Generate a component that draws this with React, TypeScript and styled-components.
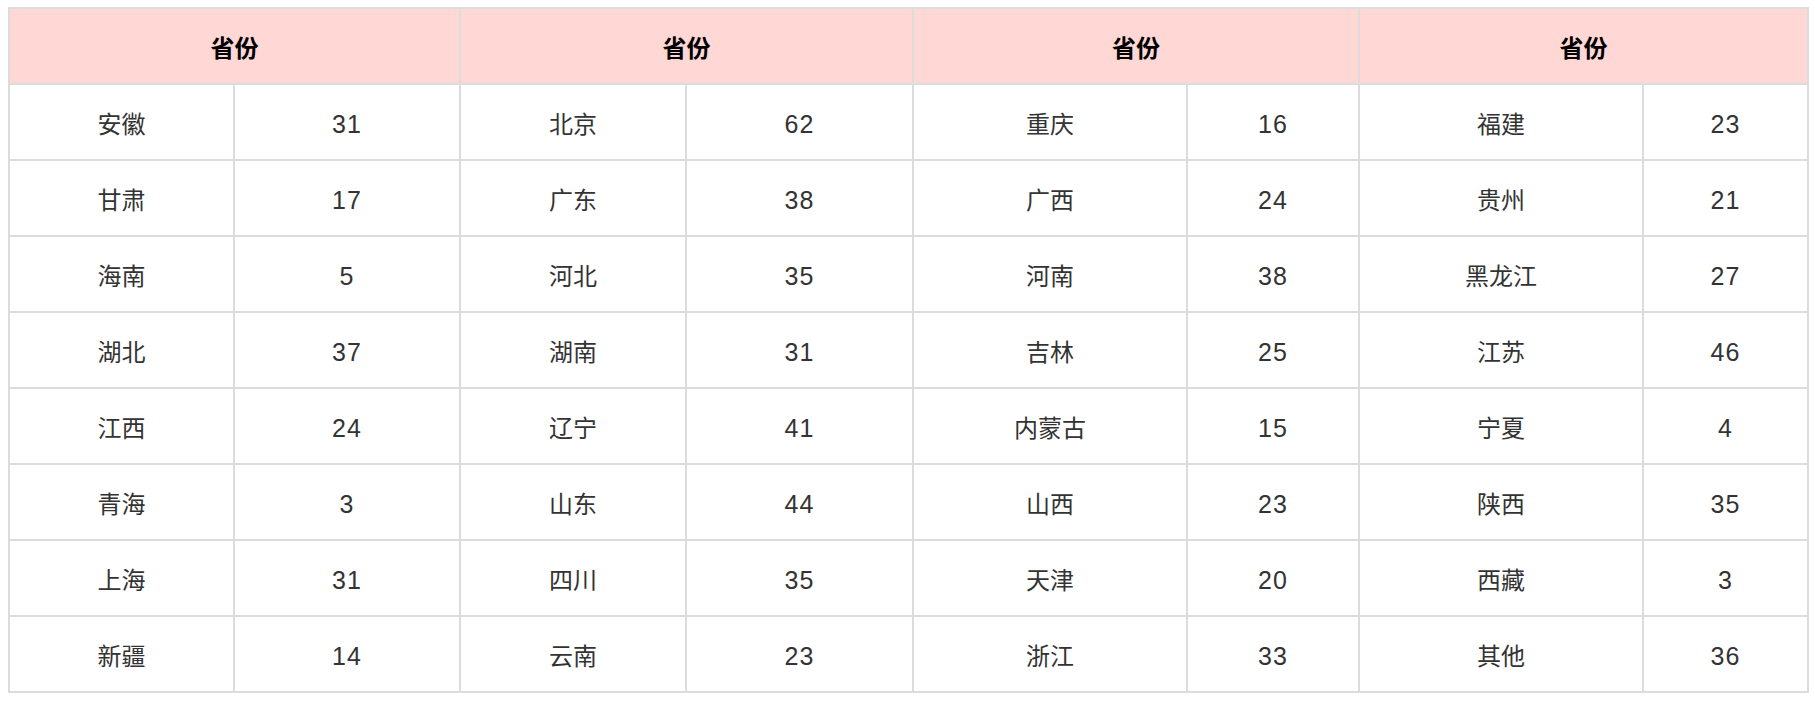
import styled, { createGlobalStyle } from 'styled-components';

const GlobalStyle = createGlobalStyle`
  body {
    margin: 0;
    background: #ffffff;
    font-family: "Liberation Sans", "Noto Sans CJK SC", sans-serif;
  }
`;

const Page = styled.div`
  padding: 7px 8px;
`;

const Grid = styled.div`
  display: grid;
  width: 1801px;
  grid-template-columns: 223px 224px 224px 225px 272px 170px 282px 163px;
  grid-auto-rows: 74px;
  gap: 2px;
  padding: 2px;
  box-sizing: border-box;
  background: #dcdcdc;
`;

const HeadCell = styled.div`
  grid-column: span 2;
  display: flex;
  align-items: center;
  justify-content: center;
  background: #ffd7d5;
  color: #000000;
  font-size: 24px;
  font-weight: bold;
`;

const Cell = styled.div<{ $numeric?: boolean }>`
  display: flex;
  align-items: center;
  justify-content: center;
  box-sizing: border-box;
  padding-top: ${(p) => (p.$numeric ? '5px' : '0')};
  background: #ffffff;
  color: #333333;
  font-size: ${(p) => (p.$numeric ? '25px' : '24px')};
  letter-spacing: ${(p) => (p.$numeric ? '1px' : '0')};
`;

type Item = [string, number];

const groups: Item[][] = [
  [['安徽', 31], ['甘肃', 17], ['海南', 5], ['湖北', 37], ['江西', 24], ['青海', 3], ['上海', 31], ['新疆', 14]],
  [['北京', 62], ['广东', 38], ['河北', 35], ['湖南', 31], ['辽宁', 41], ['山东', 44], ['四川', 35], ['云南', 23]],
  [['重庆', 16], ['广西', 24], ['河南', 38], ['吉林', 25], ['内蒙古', 15], ['山西', 23], ['天津', 20], ['浙江', 33]],
  [['福建', 23], ['贵州', 21], ['黑龙江', 27], ['江苏', 46], ['宁夏', 4], ['陕西', 35], ['西藏', 3], ['其他', 36]],
];

export default function App() {
  const rows = groups[0].map((_, i) => groups.map((g) => g[i]));

  return (
    <Page>
      <GlobalStyle />
      <Grid>
        {groups.map((_, i) => (
          <HeadCell key={`h${i}`}>省份</HeadCell>
        ))}
        {rows.map((row, r) =>
          row.map(([name, count], c) => [
            <Cell key={`n${r}-${c}`}>{name}</Cell>,
            <Cell key={`v${r}-${c}`} $numeric>
              {count}
            </Cell>,
          ])
        )}
      </Grid>
    </Page>
  );
}
